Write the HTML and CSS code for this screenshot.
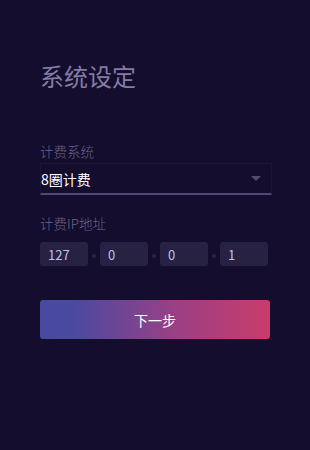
FILE: index.html
```html
<!DOCTYPE html>
<html lang="zh-CN">
<head>
    <meta charset="UTF-8">
    <meta name="viewport" content="width=device-width, initial-scale=1.0">
    <title>系统设定</title>
    <link rel="stylesheet" href="styles.css">
</head>
<body>
    <div class="container">
        <h1 class="title">系统设定</h1>
        <div class="field">
            <label class="label">计费系统</label>
            <div class="select">
                <span class="select-value">8圈计费</span>
                <span class="arrow"></span>
            </div>
        </div>
        <div class="field">
            <label class="label">计费IP地址</label>
            <div class="ip-wrapper">
                <input class="ip-part" type="text" value="127">
                <span class="dot"></span>
                <input class="ip-part" type="text" value="0">
                <span class="dot"></span>
                <input class="ip-part" type="text" value="0">
                <span class="dot"></span>
                <input class="ip-part" type="text" value="1">
            </div>
        </div>
        <button type="button" class="next">下一步</button>
    </div>
</body>
</html>
```

FILE: styles.css
```css
*{
    margin: 0;
    padding: 0;
    box-sizing: border-box;
}
body{
    height: 100vh;
    background-color: #140d2e;
    font-family: "Noto Sans CJK SC", "Liberation Sans", sans-serif;
}

.container{
    padding: 59px 38px 0 40px;
}
.title{
    font-size: 24px;
    font-weight: normal;
    color: #857ca3;
    line-height: 34px;
}

.field{
    margin-top: 19px;
}
.field:first-of-type{
    margin-top: 49px;
}
.label{
    display: block;
    font-size: 13.5px;
    font-weight: 300;
    color: #6b6489;
    line-height: 19px;
}

.select{
    position: relative;
    margin-top: 2px;
    height: 32px;
    border: 1px solid #1b1438;
    border-bottom: 2px solid #4f4870;
    display: flex;
    align-items: center;
}
.select-value{
    color: #fff;
    font-size: 14px;
}
.arrow{
    position: absolute;
    right: 10px;
    top: 12px;
    border-left: 5px solid transparent;
    border-right: 5px solid transparent;
    border-top: 5px solid #4f4870;
}

.ip-wrapper{
    margin-top: 9px;
    display: flex;
    align-items: center;
}
.ip-part{
    width: 48px;
    height: 24px;
    border: none;
    border-radius: 3px;
    background-color: #272143;
    color: #b9c3ee;
    font-family: "Noto Sans CJK SC", "Liberation Sans", sans-serif;
    font-size: 13px;
    padding-left: 8px;
    outline: none;
}
.dot{
    width: 4px;
    height: 4px;
    margin: 4px 4px 0;
    border-radius: 50%;
    background-color: #2c2648;
}

.next{
    margin-top: 34px;
    width: 230px;
    height: 39px;
    border: none;
    border-radius: 3px;
    background: linear-gradient(to right, #4848a2 0%, #4b4aa0 15%, #9c3f84 60%, #c93c6b 100%);
    color: #fff;
    font-family: "Noto Sans CJK SC", "Liberation Sans", sans-serif;
    font-size: 14px;
    cursor: pointer;
}
```
